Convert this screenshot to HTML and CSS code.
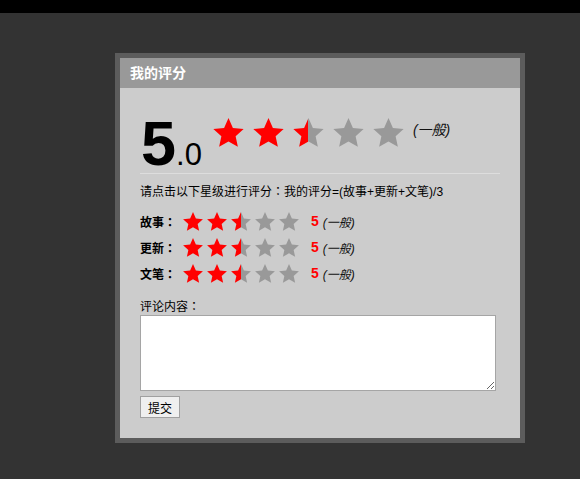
FILE: index.html
```html
<!DOCTYPE html>
<html lang="zh">
<head>
<meta charset="utf-8">
<title>我的评分</title>
<link rel="stylesheet" href="styles.css">
</head>
<body>
<svg class="defs" width="0" height="0" aria-hidden="true">
  <defs>
    <symbol id="star" viewBox="2 0 96 91">
      <polygon points="50,0 63.81,30.99 97.55,34.55 72.35,57.26 79.39,90.45 50,73.5 20.61,90.45 27.65,57.26 2.45,34.55 36.19,30.99"/>
    </symbol>
    <linearGradient id="half" x1="0" y1="0" x2="1" y2="0">
      <stop offset="48%" stop-color="#ff0000"/>
      <stop offset="48%" stop-color="#999999"/>
    </linearGradient>
  </defs>
</svg>
<div class="topbar"></div>
<div class="panel">
  <div class="panel-head">我的评分</div>
  <div class="panel-body">
    <div class="summary">
      <div class="score"><span class="int">5</span><span class="dec">.0</span></div>
      <div class="stars big">
        <svg class="on"><use href="#star"/></svg>
        <svg class="on"><use href="#star"/></svg>
        <svg class="half"><use href="#star"/></svg>
        <svg class="off"><use href="#star"/></svg>
        <svg class="off"><use href="#star"/></svg>
      </div>
      <span class="level">(一般)</span>
    </div>
    <p class="hint">请点击以下星级进行评分<span lang="zh-TW">：</span>我的评分=(故事+更新+文笔)/3</p>
    <div class="rate-row">
      <span class="rate-label">故事<span lang="zh-TW">：</span></span>
      <div class="stars small">
        <svg class="on"><use href="#star"/></svg>
        <svg class="on"><use href="#star"/></svg>
        <svg class="half"><use href="#star"/></svg>
        <svg class="off"><use href="#star"/></svg>
        <svg class="off"><use href="#star"/></svg>
      </div>
      <span class="rate-num">5</span>
      <span class="level">(一般)</span>
    </div>
    <div class="rate-row">
      <span class="rate-label">更新<span lang="zh-TW">：</span></span>
      <div class="stars small">
        <svg class="on"><use href="#star"/></svg>
        <svg class="on"><use href="#star"/></svg>
        <svg class="half"><use href="#star"/></svg>
        <svg class="off"><use href="#star"/></svg>
        <svg class="off"><use href="#star"/></svg>
      </div>
      <span class="rate-num">5</span>
      <span class="level">(一般)</span>
    </div>
    <div class="rate-row">
      <span class="rate-label">文笔<span lang="zh-TW">：</span></span>
      <div class="stars small">
        <svg class="on"><use href="#star"/></svg>
        <svg class="on"><use href="#star"/></svg>
        <svg class="half"><use href="#star"/></svg>
        <svg class="off"><use href="#star"/></svg>
        <svg class="off"><use href="#star"/></svg>
      </div>
      <span class="rate-num">5</span>
      <span class="level">(一般)</span>
    </div>
    <div class="comment-label">评论内容<span lang="zh-TW">：</span></div>
    <textarea class="comment"></textarea>
    <button class="submit" type="button">提交</button>
  </div>
</div>
</body>
</html>
```
FILE: styles.css
```css
body {
  margin: 0;
  background: #333333;
  font-family: "Liberation Sans", "Noto Sans CJK SC", sans-serif;
  color: #000;
}

.defs {
  position: absolute;
  width: 0;
  height: 0;
}

.topbar {
  height: 13px;
  background: #000;
}

.panel {
  width: 400px;
  margin: 40px 0 0 115px;
  border: 5px solid #5c5c5c;
}

.panel-head {
  height: 30px;
  line-height: 30px;
  background: #999999;
  color: #fff;
  font-weight: bold;
  font-size: 14px;
  padding-left: 10px;
}

.panel-body {
  background: #cccccc;
  padding: 0 20px 20px;
}

.summary {
  display: flex;
  align-items: flex-start;
  height: 85px;
  border-bottom: 1px solid #dddddd;
}

.score {
  margin-top: 24px;
  margin-right: 11px;
  padding-left: 1px;
  line-height: 1;
  font-size: 63px;
  font-weight: bold;
}

.score .dec {
  font-size: 31px;
  font-weight: normal;
}

.stars {
  display: flex;
}

.stars .on { fill: #ff0000; }
.stars .off { fill: #999999; }
.stars .half { fill: url(#half); }

.stars.big {
  margin-top: 30px;
  gap: 9px;
}

.stars.big svg {
  width: 31px;
  height: 29px;
}

.level {
  font-style: italic;
  font-size: 12px;
  color: #111;
}

.summary .level {
  font-size: 14px;
  line-height: 18px;
  margin: 33px 0 0 9px;
}

.hint {
  margin: 0 0 7px;
  padding-top: 9px;
  font-size: 12px;
  line-height: 18px;
}

.rate-row {
  display: flex;
  align-items: center;
  height: 26px;
  font-size: 12px;
}

.rate-label {
  font-weight: bold;
  width: 43px;
}

.stars.small {
  gap: 4px;
}

.stars.small svg {
  width: 20px;
  height: 19px;
}

.rate-num {
  color: #ff0000;
  font-weight: bold;
  font-size: 14px;
  margin-left: 12px;
}

.rate-row .level {
  margin-left: 4px;
}

.comment-label {
  margin-top: 13px;
  font-size: 12px;
  line-height: 16px;
}

.comment {
  display: block;
  box-sizing: border-box;
  width: 356px;
  height: 76px;
  margin: 0;
  padding: 2px;
  border: 1px solid #a5a5a5;
  background: #fff;
}

.submit {
  display: block;
  box-sizing: border-box;
  margin-top: 5px;
  width: 40px;
  height: 22px;
  padding: 0;
  font-family: "Liberation Sans", "Noto Sans CJK SC", sans-serif;
  font-size: 12px;
  color: #000;
  background: #efefef;
  border: 1px solid #a0a0a0;
  border-radius: 0;
}
```
